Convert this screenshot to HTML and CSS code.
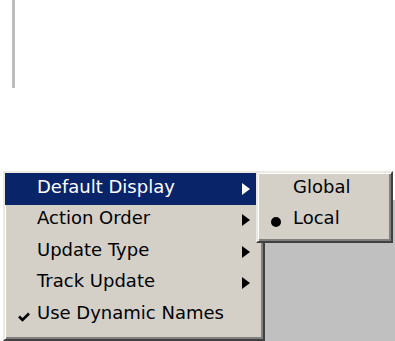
FILE: index.html
```html
<!DOCTYPE html>
<html>
<head>
<meta charset="utf-8">
<link rel="stylesheet" href="styles.css">
</head>
<body>
<div class="page">
  <div class="rule"></div>
  <div class="stage">
    <div class="panel"></div>
  </div>

  <div class="menu main-menu">
    <div class="item active"><span class="mark"></span><span class="label">Default Display</span><span class="arrow"></span></div>
    <div class="item"><span class="mark"></span><span class="label">Action Order</span><span class="arrow"></span></div>
    <div class="item"><span class="mark"></span><span class="label">Update Type</span><span class="arrow"></span></div>
    <div class="item"><span class="mark"></span><span class="label">Track Update</span><span class="arrow"></span></div>
    <div class="item"><span class="mark"><svg class="check" width="12" height="10" viewBox="0 0 12 10"><path d="M1 4.5 L4.5 8 L11 1.5" fill="none" stroke="#000" stroke-width="2.6"/></svg></span><span class="label">Use Dynamic Names</span><span class="arrow none"></span></div>
  </div>

  <div class="menu sub-menu">
    <div class="item"><span class="mark"></span><span class="label">Global</span></div>
    <div class="item"><span class="mark"><span class="bullet"></span></span><span class="label">Local</span></div>
  </div>
</div>
</body>
</html>
```

FILE: styles.css
```css
html, body {
  margin: 0;
  padding: 0;
  background: #ffffff;
}

.page {
  position: relative;
  width: 395px;
  height: 341px;
  overflow: hidden;
  font-family: "DejaVu Sans", Verdana, sans-serif;
  font-size: 18px;
  color: #000;
}

.rule {
  margin-left: 12px;
  width: 3px;
  height: 88px;
  background: #bdbdbd;
}

.stage {
  height: 253px;
  display: flex;
}

.panel {
  margin-left: 265px;
  margin-top: 112px;
  flex: 1;
  background: #c0c0c0;
}

.menu {
  position: absolute;
  box-sizing: border-box;
  background: #d4d0c8;
  border-style: solid;
  border-width: 2px;
  border-color: #ece9e2 #404040 #404040 #ece9e2;
  box-shadow: inset 1px 1px 0 #ffffff, inset -2px -2px 0 #808080;
  display: flex;
  flex-direction: column;
}

.main-menu {
  left: 3px;
  top: 171px;
  width: 262px;
  height: 170px;
  padding: 0 2px 0 0;
}

.sub-menu {
  left: 256px;
  top: 171px;
  width: 137px;
  height: 72px;
  padding: 0 2px 0 0;
}

.item {
  height: 31.5px;
  display: flex;
  align-items: center;
  white-space: nowrap;
  flex: none;
}

.item.active {
  background: #0a246a;
  color: #ffffff;
}

.mark {
  width: 32px;
  height: 100%;
  display: flex;
  align-items: center;
  justify-content: flex-start;
  flex: none;
}

.check {
  margin-left: 13px;
  margin-top: 5px;
}

.label {
  flex: 1;
  line-height: 22px;
  padding-bottom: 4px;
}

.arrow {
  width: 0;
  height: 0;
  margin-right: 11px;
  border-top: 6px solid transparent;
  border-bottom: 6px solid transparent;
  border-left: 8px solid #000;
}

.item.active .arrow {
  border-left-color: #ffffff;
}

.arrow.none {
  border-left-color: transparent;
}

.sub-menu .mark {
  width: 35px;
}

.bullet {
  display: block;
  width: 10px;
  height: 10px;
  border-radius: 50%;
  background: #000;
  margin-left: 13px;
  margin-top: 3px;
}
```
